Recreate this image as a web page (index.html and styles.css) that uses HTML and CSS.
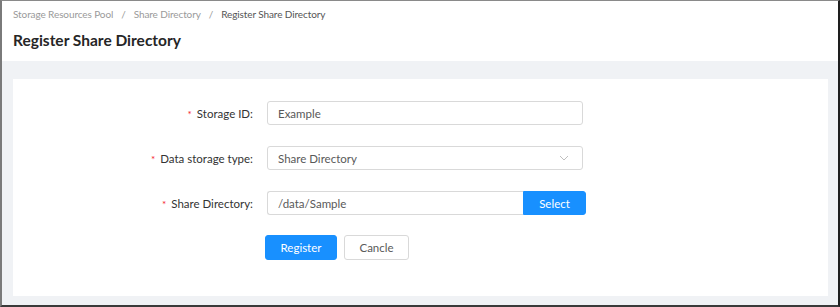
FILE: index.html
```html
<!DOCTYPE html>
<html lang="en">
<head>
  <meta charset="UTF-8">
  <title>Register Share Directory</title>
  <link rel="stylesheet" href="styles.css">
</head>
<body>
  <div class="frame">
    <div class="page-header">
      <div class="breadcrumb">
        <span class="crumb">Storage Resources Pool</span>
        <span class="sep">/</span>
        <span class="crumb">Share Directory</span>
        <span class="sep">/</span>
        <span class="crumb current">Register Share Directory</span>
      </div>
      <h1>Register Share Directory</h1>
    </div>
    <div class="content">
      <div class="card">
        <form class="form">
          <div class="form-row">
            <label class="label"><span class="req">*</span>Storage ID:</label>
            <input class="input" type="text" value="Example">
          </div>
          <div class="form-row">
            <label class="label"><span class="req">*</span>Data storage type:</label>
            <div class="input select">
              <span>Share Directory</span>
              <svg class="arrow" width="10" height="6" viewBox="0 0 10 6"><path d="M1 1l4 4 4-4" fill="none" stroke="#bfbfbf" stroke-width="1"/></svg>
            </div>
          </div>
          <div class="form-row">
            <label class="label"><span class="req">*</span>Share Directory:</label>
            <div class="input-group">
              <input class="input grouped" type="text" value="/data/Sample">
              <button type="button" class="btn primary addon">Select</button>
            </div>
          </div>
          <div class="form-row actions">
            <button type="button" class="btn primary">Register</button>
            <button type="button" class="btn">Cancle</button>
          </div>
        </form>
      </div>
    </div>
  </div>
</body>
</html>
```

FILE: styles.css
```css
* {
  box-sizing: border-box;
}

body {
  margin: 0;
  font-family: 'Lato', 'Noto Sans', sans-serif;
  font-size: 11.5px;
  color: #595959;
  background: #fff;
}

.frame {
  width: 840px;
  height: 307px;
  border-top: 1px solid #8a8a8a;
  border-left: 2px solid #7a7a7a;
  border-right: 2px solid #1e1e1e;
  border-bottom: 2px solid #3a3a3a;
  display: flex;
  flex-direction: column;
  overflow: hidden;
}

.page-header {
  background: #fff;
  padding: 6px 11px 0;
  height: 60px;
}

.breadcrumb {
  font-size: 10px;
  letter-spacing: -0.1px;
  color: #9a9a9a;
  display: flex;
  gap: 8px;
  line-height: 14px;
}

.breadcrumb .current {
  color: #555;
}

h1 {
  margin: 8px 0 0;
  font-size: 15.5px;
  font-weight: 700;
  color: #262626;
  line-height: 22px;
}

.content {
  flex: 1;
  background: #f0f2f5;
  padding: 18px 10px 9px 11px;
}

.card {
  background: #fff;
  height: 100%;
  padding: 22px 0 0;
}

.form {
  display: flex;
  flex-direction: column;
  gap: 21px;
}

.form-row {
  display: flex;
  align-items: center;
  height: 24px;
}

.label {
  width: 254px;
  text-align: right;
  padding-right: 14px;
  color: #333;
}

.req {
  color: #f5222d;
  margin-right: 5px;
  font-size: 10px;
}

.input {
  width: 316px;
  height: 24px;
  border: 1px solid #d9d9d9;
  border-radius: 3px;
  padding: 0 10px;
  font-family: inherit;
  font-size: 11.5px;
  color: #595959;
  background: #fff;
  outline: none;
}

.select {
  display: flex;
  align-items: center;
  justify-content: space-between;
}

.arrow {
  margin-right: 3px;
}

.input-group {
  display: flex;
}

.input.grouped {
  width: 256px;
  border-radius: 3px 0 0 3px;
  border-right: none;
}

.btn {
  height: 25px;
  padding: 0 17px;
  font-family: inherit;
  font-size: 11.5px;
  color: #595959;
  background: #fff;
  border: 1px solid #d9d9d9;
  border-radius: 3px;
  cursor: pointer;
}

.btn.primary {
  background: #1890ff;
  border-color: #1890ff;
  color: #fff;
}

.btn.addon {
  width: 63px;
  height: 24px;
  padding: 0;
  border-radius: 0 3px 3px 0;
}

.actions {
  padding-left: 252px;
  gap: 7px;
  height: 25px;
  margin-top: -1px;
}

.actions .btn.primary {
  width: 72px;
  padding: 0;
}

.actions .btn:not(.primary) {
  width: 65px;
  padding: 0;
}
```
